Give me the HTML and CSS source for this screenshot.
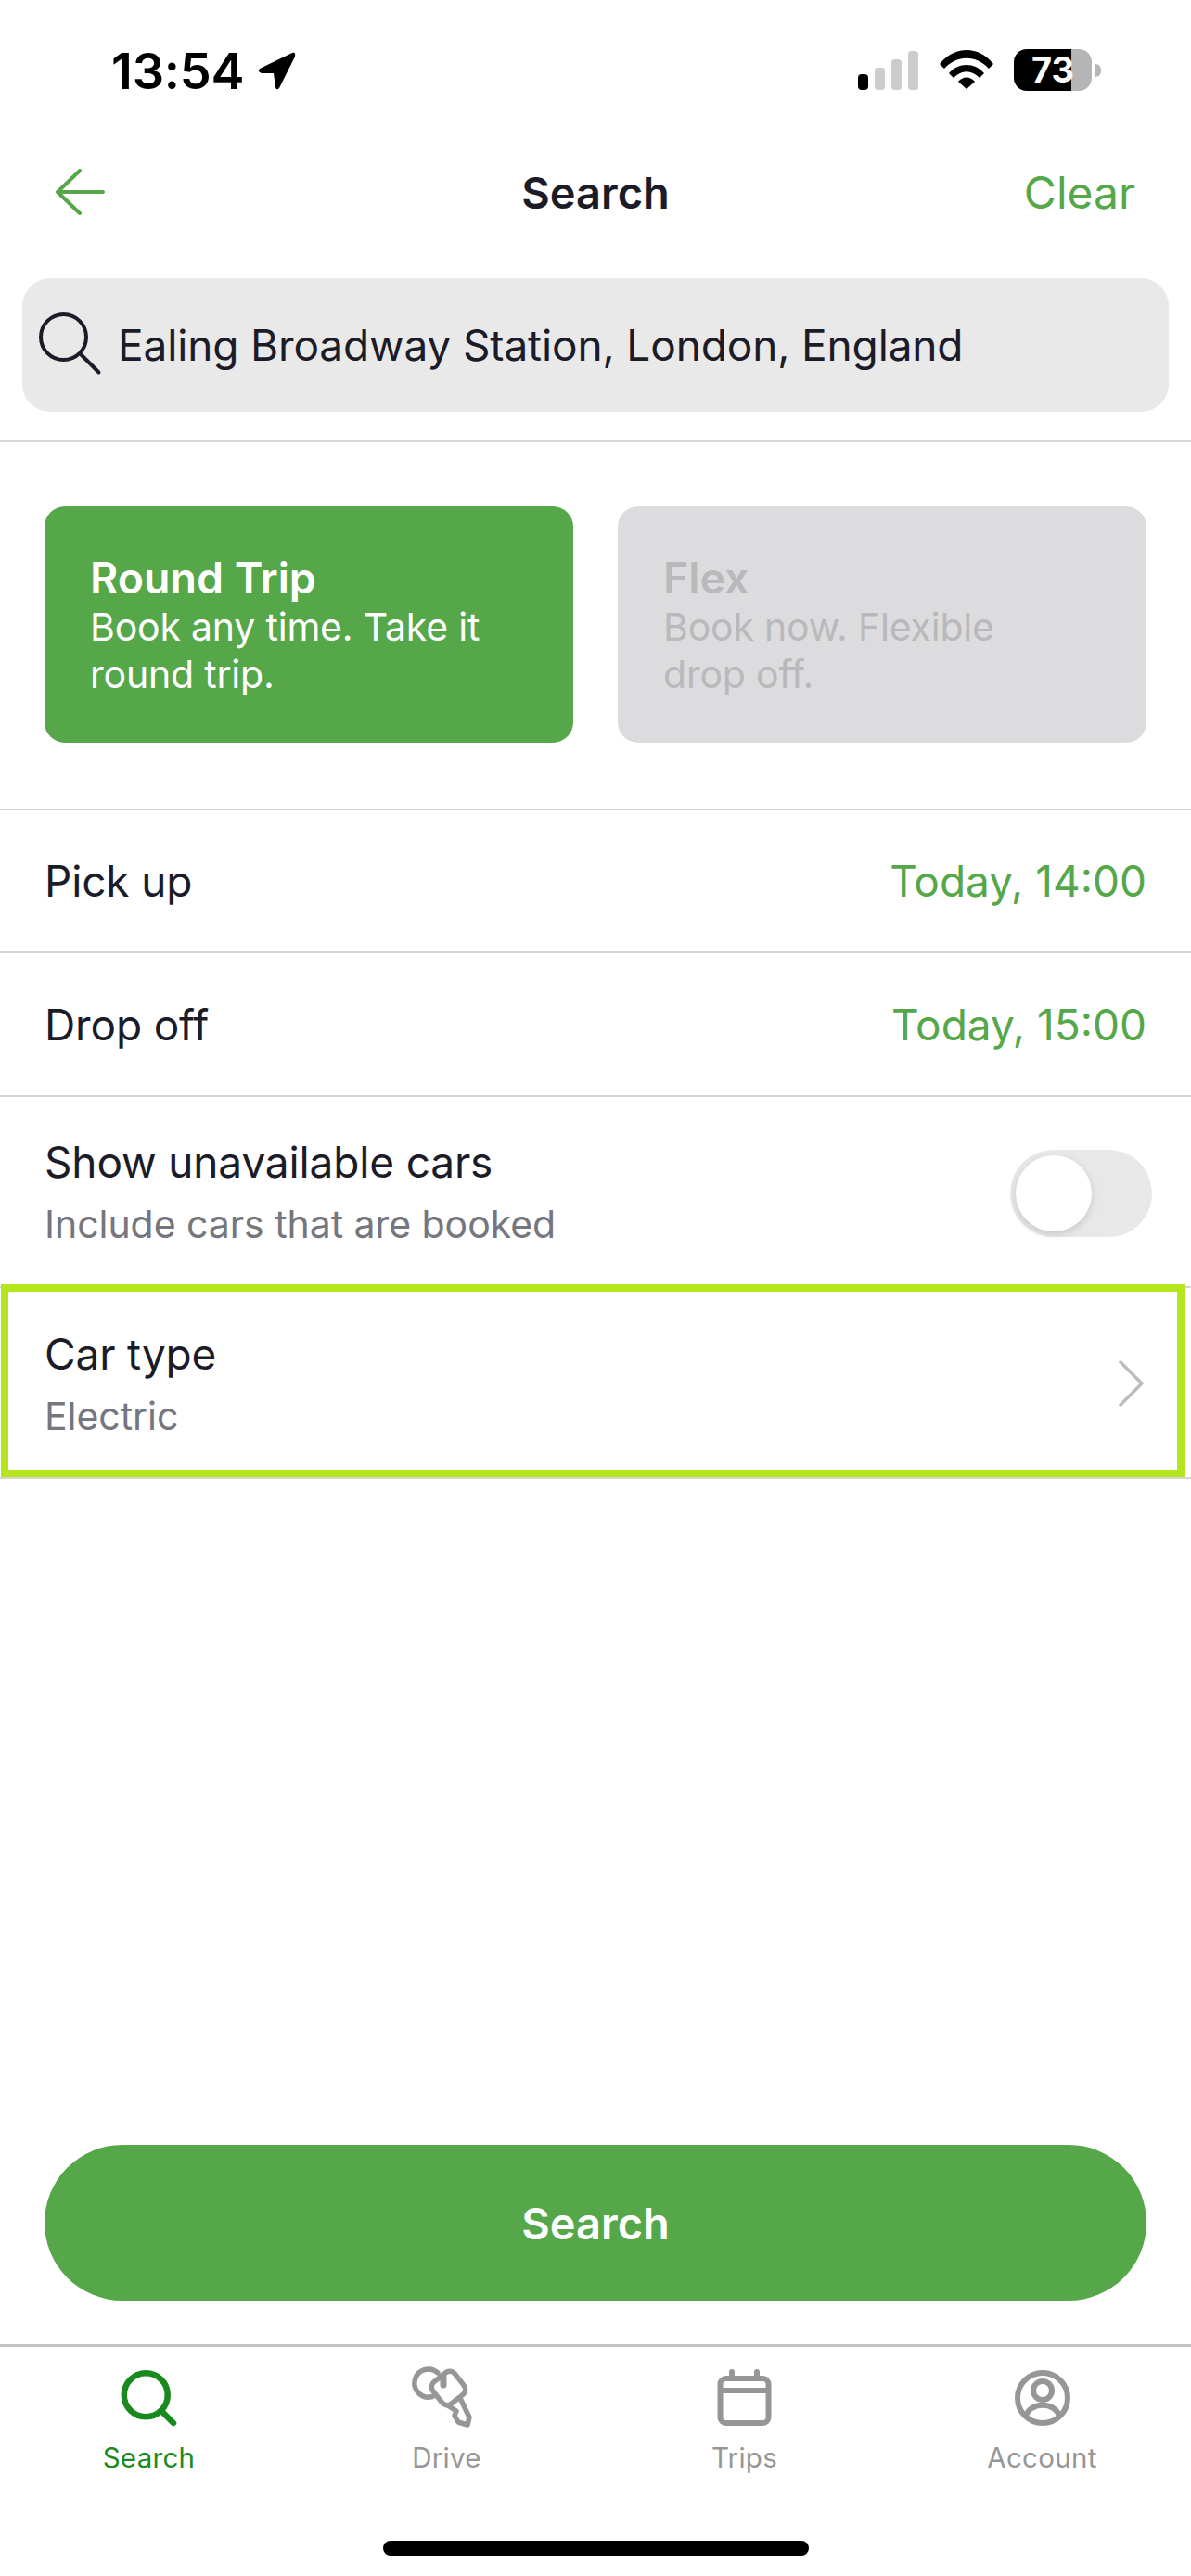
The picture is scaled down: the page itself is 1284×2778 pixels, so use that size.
FILE: index.html
```html
<!DOCTYPE html>
<html lang="en">
<head>
<meta charset="utf-8">
<title>Search</title>
<link rel="stylesheet" href="styles.css">
</head>
<body>
<div class="app">
  <div class="status">
    <div class="status-left">
      <span class="time">13:54</span>
      <svg class="loc" width="44" height="44" viewBox="0 0 44 44"><path d="M3 20 L38 3 Q42 2 41 7 L24 41 Q21 44 20 40 L18 25 L5 25 Q0 23 3 20 Z" fill="#000"/></svg>
    </div>
    <div class="status-right">
      <svg class="signal" width="66" height="42" viewBox="0 0 66 42"><rect x="1" y="25" width="11" height="17" rx="4" fill="#000"/><rect x="19" y="18" width="11" height="24" rx="3.5" fill="#ccc"/><rect x="37" y="9" width="11" height="33" rx="3.5" fill="#ccc"/><rect x="55" y="0" width="11" height="42" rx="3.5" fill="#ccc"/></svg>
      <svg class="wifi" width="58" height="42" viewBox="0 0 58 42"><path d="M0 15 C16 -5 42 -5 58 15 L53 20 C39 5 19 5 5 20 Z M10 25 C20 13 38 13 48 25 L43 30 C34 21 24 21 15 30 Z M20 34 C25 28 33 28 38 34 L29 42 Z" fill="#000"/></svg>
      <div class="battery"><div class="battery-body"><span class="battery-level">73</span></div><span class="battery-nub"></span></div>
    </div>
  </div>

  <div class="nav">
    <svg class="back" width="56" height="50" viewBox="0 0 56 50"><path d="M27 2 L3 25 L27 48 M3 25 H52" fill="none" stroke="#55a749" stroke-width="4" stroke-linecap="round" stroke-linejoin="round"/></svg>
    <span class="nav-title">Search</span>
    <span class="nav-clear">Clear</span>
  </div>

  <div class="search-wrap">
    <div class="search-box">
      <svg class="search-icon" width="68" height="68" viewBox="0 0 68 68"><circle cx="26.5" cy="26.5" r="24.5" fill="none" stroke="#1c1c28" stroke-width="4"/><path d="M45 45 L64.5 64.5" stroke="#1c1c28" stroke-width="4" stroke-linecap="round"/></svg>
      <span class="search-text">Ealing Broadway Station, London, England</span>
    </div>
  </div>

  <div class="cards">
    <div class="card card-on">
      <div class="card-title">Round Trip</div>
      <div class="card-desc">Book any time. Take it round trip.</div>
    </div>
    <div class="card card-off">
      <div class="card-title">Flex</div>
      <div class="card-desc">Book now. Flexible<br>drop off.</div>
    </div>
  </div>

  <div class="row row-simple"><span class="row-label">Pick up</span><span class="row-value">Today, 14:00</span></div>
  <div class="row row-simple row-second"><span class="row-label">Drop off</span><span class="row-value">Today, 15:00</span></div>
  <div class="row row-double">
    <div class="row-text"><span class="row-label">Show unavailable cars</span><span class="row-sub">Include cars that are booked</span></div>
    <div class="toggle"><span class="knob"></span></div>
  </div>
  <div class="highlight-wrap">
    <div class="row highlight">
      <div class="row-text"><span class="row-label">Car type</span><span class="row-sub">Electric</span></div>
      <svg class="chevron" width="30" height="50" viewBox="0 0 30 50"><path d="M4 2 L27 25 L4 48" fill="none" stroke="#bdbdc1" stroke-width="3.5" stroke-linecap="round" stroke-linejoin="round"/></svg>
    </div>
  </div>

  <div class="spacer"></div>

  <div class="action"><div class="search-btn">Search</div></div>

  <div class="tabs">
    <div class="tab tab-active">
      <svg width="66" height="66" viewBox="0 0 66 66"><circle cx="29.25" cy="29.75" r="23.5" fill="none" stroke="#1b8a1e" stroke-width="6.5"/><path d="M46 47 L59 60" stroke="#1b8a1e" stroke-width="6.5" stroke-linecap="round"/></svg>
      <span class="tab-label">Search</span>
    </div>
    <div class="tab">
      <svg class="key" width="66" height="66" viewBox="449 2553 66 66"><g fill="none" stroke="#969696" stroke-width="5.5" stroke-linecap="round" stroke-linejoin="round"><path d="M472 2559 A15 15 0 1 0 466 2584.5"/><rect x="468.5" y="2560.5" width="30" height="30" rx="7" transform="rotate(-38 483.5 2575.5)"/><path d="M478 2564 V2572" stroke-width="7"/><path d="M497 2588 L506 2607 L504 2615 L494 2612 L490 2605 L492 2600 L484 2595"/></g></svg>
      <span class="tab-label">Drive</span>
    </div>
    <div class="tab">
      <svg width="66" height="66" viewBox="0 0 66 66"><g fill="none" stroke="#969696" stroke-width="6" stroke-linejoin="round"><rect x="6.5" y="12" width="52" height="48" rx="6"/><path d="M6.5 25 H58.5"/><path d="M19 5 V12 M46 5 V12" stroke-linecap="round"/></g></svg>
      <span class="tab-label">Trips</span>
    </div>
    <div class="tab">
      <svg width="66" height="66" viewBox="0 0 66 66"><g fill="none" stroke="#969696" stroke-width="6"><circle cx="33" cy="33" r="27"/><circle cx="33" cy="25" r="10"/><path d="M15 52 C20 37 46 37 51 52"/></g></svg>
      <span class="tab-label">Account</span>
    </div>
  </div>
  <div class="home"><span class="home-bar"></span></div>
</div>
</body>
</html>
```
FILE: styles.css
```css
* { box-sizing: border-box; }
html, body { margin: 0; padding: 0; background: #fff; }
body { font-family: Inter, "Liberation Sans", sans-serif; color: #1c1c28; }
.app { width: 1284px; height: 2778px; display: flex; flex-direction: column; overflow: hidden; }

.status { height: 140px; flex: none; display: flex; justify-content: space-between; padding: 50px 97px 0 120px; }
.status-left { display: flex; align-items: flex-start; gap: 14px; }
.time { font-size: 54px; font-weight: 600; line-height: 54px; color: #000; letter-spacing: -0.2px; }
.loc { margin-top: 4px; }
.status-right { display: flex; align-items: flex-start; }
.signal { margin-top: 5px; }
.wifi { margin: 4px 0 0 23px; }
.battery { display: flex; align-items: center; margin: 3px 0 0 22px; }
.battery-body { width: 84px; height: 45px; border-radius: 14px; background: linear-gradient(to right, #000 62px, #b5b5b5 62px); position: relative; }
.battery-level { position: absolute; left: 19px; top: 0; line-height: 45px; font-size: 38px; font-weight: 700; color: #fff; }
.battery-nub { width: 6px; height: 14px; margin-left: 4px; border-radius: 0 7px 7px 0; background: #b5b5b5; }

.nav { height: 132px; flex: none; display: flex; align-items: center; justify-content: space-between; padding: 2px 60px 0 59px; position: relative; }
.nav-title { position: absolute; left: 0; right: 0; text-align: center; font-size: 47px; font-weight: 600; }
.nav-clear { font-size: 48px; color: #55a749; }

.search-wrap { flex: none; padding: 28px 24px 30px; border-bottom: 3px solid #d8d8d8; }
.search-box { height: 144px; border-radius: 30px; background: #e9e9ea; display: flex; align-items: center; padding-left: 18px; }
.search-icon { margin-top: -2px; }
.search-text { font-size: 46px; margin-left: 17px; letter-spacing: -0.15px; }

.cards { flex: none; display: flex; gap: 48px; padding: 69px 48px 71px; border-bottom: 2px solid #d4d4d6; }
.card { flex: 1; height: 255px; border-radius: 22px; padding: 52px 48px 0 49px; }
.card-on { background: #55a749; color: #fff; }
.card-off { background: #dcdcde; color: #b9b9bb; }
.card-title { font-size: 46.5px; font-weight: 600; line-height: 50px; }
.card-desc { font-size: 41px; line-height: 51px; margin-top: 3px; letter-spacing: -0.2px; }

.row { display: flex; align-items: center; justify-content: space-between; padding: 0 48px; flex: none; }
.row-simple { height: 154px; border-bottom: 2px solid #d4d4d6; }
.row-second { height: 155px; }
.row-double { height: 204px; padding-right: 42px; }
.row-label { font-size: 46px; display: block; line-height: 56px; letter-spacing: -0.15px; }
.row-value { font-size: 46px; color: #55a749; }
.row-sub { font-size: 41px; display: block; color: #76767e; line-height: 50px; margin-top: 14px; letter-spacing: -0.05px; }

.toggle { width: 153px; height: 94px; border-radius: 47px; background: #e8e8e9; padding: 6px; margin-top: 4px; }
.knob { display: block; width: 82px; height: 82px; border-radius: 50%; background: #fff; box-shadow: 0 3px 8px rgba(0,0,0,.14); }

.highlight-wrap { flex: none; height: 208px; border-top: 2px solid #d4d4d6; border-bottom: 2px solid #d4d4d6; }
.highlight { height: 208px; margin: -4px 7px 0 1px; padding: 6px 35px 0 39px; border: 8px solid #b5e61d; background: #fff; }

.spacer { flex: 1; }
.action { flex: none; padding: 0 48px 47px; }
.search-btn { height: 168px; border-radius: 84px; background: #55a749; color: #fff; font-size: 47px; font-weight: 600; display: flex; align-items: center; justify-content: center; }

.tabs { flex: none; height: 212px; display: grid; grid-template-columns: repeat(4, 1fr); border-top: 3px solid #c4c4c6; padding-top: 22px; }
.tab { display: flex; flex-direction: column; align-items: center; color: #969696; }
.key { overflow: visible; }
.tab-label { font-size: 29.5px; line-height: 36px; margin-top: 13px; letter-spacing: 0.3px; }
.tab-active { color: #1b8a1e; }

.home { flex: none; height: 38px; display: flex; justify-content: center; }
.home-bar { width: 459px; height: 16px; border-radius: 8px; background: #000; }
```
